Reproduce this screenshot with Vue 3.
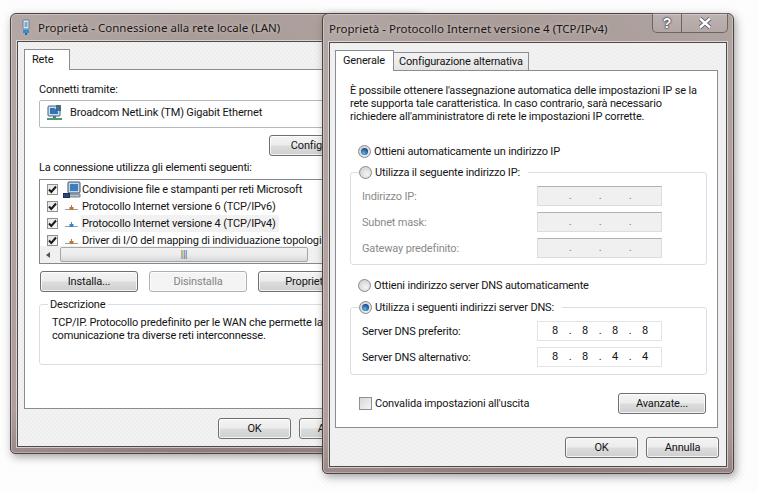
<script setup>
const listItems = [
  { label: 'Condivisione file e stampanti per reti Microsoft', kind: 'pc' },
  { label: 'Protocollo Internet versione 6 (TCP/IPv6)', kind: 'proto', color: '#b9782f' },
  { label: 'Protocollo Internet versione 4 (TCP/IPv4)', kind: 'proto', color: '#3f86c8', selected: true },
  { label: 'Driver di I/O del mapping di individuazione topologia', kind: 'proto', color: '#b9782f' },
]
const ipRows = ['Indirizzo IP:', 'Subnet mask:', 'Gateway predefinito:']
const dnsRows = [
  { label: 'Server DNS preferito:', octets: ['8', '8', '8', '8'] },
  { label: 'Server DNS alternativo:', octets: ['8', '8', '4', '4'] },
]
</script>

<template>
  <div class="desktop">
    <!-- Back window -->
    <section class="win back">
      <header class="titlebar">
        <svg class="title-icon" width="10" height="17" viewBox="0 0 10 17">
          <rect x="2" y="1" width="6" height="9" rx="1" fill="#dfe9f2" stroke="#5b7f9c" />
          <rect x="3.500" y="3" width="3" height="5" fill="#7fa8c9" />
          <path d="M2 11h6v3H2z" fill="#2f8fd0" />
          <path d="M4 14h2v2H4z" fill="#1d6aa5" />
        </svg>
        <span class="title-text">Proprietà - Connessione alla rete locale (LAN)</span>
      </header>
      <div class="client">
        <div class="tabs">
          <div class="tab active">Rete</div>
        </div>
        <div class="panel back-panel">
          <div class="label">Connetti tramite:</div>
          <div class="adapter">
            <svg width="17" height="17" viewBox="0 0 17 17">
              <rect x="2" y="2" width="12" height="10" rx="1" fill="#cfe0ee" stroke="#3c5f7c" />
              <rect x="4" y="4" width="8" height="6" fill="#2f74b5" />
              <path d="M8 4l4 0 0 4z" fill="#7db7e0" />
              <path d="M7 12h3v2H7z" fill="#5d7388" />
              <path d="M1 14h15v2H1z" fill="#4d9a70" />
              <path d="M10 1h5v6h-5z" fill="#2b4f6e" opacity=".75" />
            </svg>
            <span>Broadcom NetLink (TM) Gigabit Ethernet</span>
          </div>
          <div class="config-row">
            <button class="btn wide">Configura...</button>
          </div>
          <div class="label uses">La connessione utilizza gli elementi seguenti:</div>
          <div class="list">
            <div class="list-rows">
              <div v-for="item in listItems" :key="item.label" class="list-row">
                <span class="check on">
                  <svg width="9" height="9" viewBox="0 0 9 9"><path d="M1 4.500l2.300 2.500L8 1.500" fill="none" stroke="#1a1a1a" stroke-width="2" /></svg>
                </span>
                <svg v-if="item.kind === 'pc'" class="row-icon" width="18" height="18" viewBox="0 0 18 18">
                  <rect x="5" y="1" width="12" height="11" rx="1" fill="#c9d6e2" stroke="#39506a" />
                  <rect x="7" y="3" width="8" height="7" fill="#3a7fc4" />
                  <path d="M5 13h12v3H5z" fill="#b8bfc6" stroke="#5c6773" stroke-width=".8" />
                  <rect x="0.500" y="12.500" width="6" height="4" fill="#27457e" stroke="#1c2f57" />
                </svg>
                <svg v-else class="row-icon" width="18" height="18" viewBox="0 0 18 18">
                  <path d="M2 11.500h13" stroke="#9aa0a6" stroke-width="1" />
                  <rect x="6.500" y="9" width="4" height="3" :fill="item.color" />
                  <path d="M8.500 7v2" :stroke="item.color" stroke-width="1" />
                </svg>
                <span class="row-text" :class="{ selected: item.selected }">{{ item.label }}</span>
              </div>
            </div>
            <div class="hscroll">
              <span class="arrow"></span>
              <div class="thumb">|||</div>
            </div>
          </div>
          <div class="btn-row">
            <button class="btn wide">Installa...</button>
            <button class="btn wide" disabled>Disinstalla</button>
            <button class="btn wide">Proprietà</button>
          </div>
          <div class="group desc">
            <span class="legend desc-legend">Descrizione</span>
            <p class="desc-text">TCP/IP. Protocollo predefinito per le WAN che permette la<br />comunicazione tra diverse reti interconnesse.</p>
          </div>
        </div>
        <footer class="foot back-foot">
          <button class="btn ok">OK</button>
          <button class="btn ok">Annulla</button>
        </footer>
      </div>
    </section>

    <!-- Front window -->
    <section class="win front">
      <header class="titlebar">
        <span class="title-text">Proprietà - Protocollo Internet versione 4 (TCP/IPv4)</span>
        <div class="caption">
          <div class="cap-btn help">?</div>
          <div class="cap-btn close">
            <svg width="16" height="12" viewBox="0 0 16 12">
              <path d="M3 1.500l10 9M13 1.500l-10 9" stroke="#4c4a63" stroke-width="4" />
              <path d="M3 1.500l10 9M13 1.500l-10 9" stroke="#fff" stroke-width="2.400" />
            </svg>
          </div>
        </div>
      </header>
      <div class="client">
        <div class="tabs">
          <div class="tab active gen">Generale</div>
          <div class="tab idle">Configurazione alternativa</div>
        </div>
        <div class="panel front-panel">
          <p class="intro">
            È possibile ottenere l'assegnazione automatica delle impostazioni IP se la<br />
            rete supporta tale caratteristica. In caso contrario, sarà necessario<br />
            richiedere all'amministratore di rete le impostazioni IP corrette.
          </p>
          <label class="choice first"><span class="radio on"></span>Ottieni automaticamente un indirizzo IP</label>
          <div class="group ipgroup">
            <label class="choice legend"><span class="radio"></span>Utilizza il seguente indirizzo IP:</label>
            <div v-for="row in ipRows" :key="row" class="ip-row off">
              <span>{{ row }}</span>
              <div class="ip-field off">
                <template v-for="n in 4" :key="n">
                  <span class="octet"></span><span v-if="n < 4" class="dot">.</span>
                </template>
              </div>
            </div>
          </div>
          <label class="choice dns-auto"><span class="radio"></span>Ottieni indirizzo server DNS automaticamente</label>
          <div class="group dnsgroup">
            <label class="choice legend"><span class="radio on"></span>Utilizza i seguenti indirizzi server DNS:</label>
            <div v-for="row in dnsRows" :key="row.label" class="ip-row">
              <span>{{ row.label }}</span>
              <div class="ip-field">
                <template v-for="(o, i) in row.octets" :key="i">
                  <span class="octet">{{ o }}</span><span v-if="i < 3" class="dot">.</span>
                </template>
              </div>
            </div>
          </div>
          <div class="validate">
            <label class="choice"><span class="check big"></span>Convalida impostazioni all'uscita</label>
            <button class="btn adv">Avanzate...</button>
          </div>
        </div>
        <footer class="foot front-foot">
          <button class="btn ok">OK</button>
          <button class="btn ok">Annulla</button>
        </footer>
      </div>
    </section>
  </div>
</template>

<style scoped>
.desktop {
  position: relative;
  width: 757px;
  height: 491px;
  overflow: hidden;
  background-color: #fefefe;
  background-image: repeating-conic-gradient(#fefefe 0 25%, #fbfbfb 0 50%);
  background-size: 4px 4px;
  font-family: Roboto, "Noto Sans", sans-serif;
  font-size: 11px;
  letter-spacing: -.17px;
  line-height: 13px;
  color: #141414;
}
.win {
  position: absolute;
  box-sizing: border-box;
  display: flex;
  flex-direction: column;
  border: 1px solid #4d4543;
  border-radius: 6px 6px 5px 5px;
  padding: 0 6px 6px;
  background:
    linear-gradient(90deg, rgba(255, 255, 255, .12), rgba(255, 255, 255, 0) 45%, rgba(255, 255, 255, .08)),
    linear-gradient(#a99c99, #a5918e 90%, #8c7b78);
  box-shadow: 2px 3px 8px rgba(60, 50, 50, .45), inset 0 0 0 1px rgba(255, 255, 255, .3);
}
.back {
  left: 10px;
  top: 13px;
  width: 412px;
  height: 441px;
}
.front {
  left: 322px;
  top: 13px;
  width: 412px;
  height: 461px;
}
.titlebar {
  position: relative;
  display: flex;
  align-items: center;
  height: 28px;
  flex: none;
  gap: 7px;
}
.back .titlebar {
  height: 27px;
}
.title-icon {
  margin-left: 4px;
}
.title-text {
  font-family: "Noto Sans", sans-serif;
  font-size: 11.500px;
  letter-spacing: 0;
  color: #1c1514;
  white-space: nowrap;
  text-shadow: 0 0 4px rgba(255, 255, 255, .55);
}
.caption {
  position: absolute;
  top: -1px;
  right: -1px;
  display: flex;
  width: 76px;
  height: 20px;
  box-sizing: border-box;
  border: 1px solid #6f6462;
  border-top: 0;
  border-radius: 0 0 5px 5px;
  background: linear-gradient(rgba(255, 255, 255, .18), rgba(255, 255, 255, .06));
}
.cap-btn {
  display: flex;
  align-items: center;
  justify-content: center;
}
.help {
  width: 28px;
  border-right: 1px solid #6f6462;
  font: bold 14px/16px "Liberation Sans", sans-serif;
  color: #fff;
  text-shadow: 0 0 2px #3c3a55, 0 0 2px #3c3a55, 0 0 1px #3c3a55;
}
.close {
  flex: 1;
}
.client {
  flex: 1;
  display: flex;
  flex-direction: column;
  box-sizing: border-box;
  padding: 7px 7px 0 5px;
  border: 1px solid #4f4a49;
  background-color: #f0f0f0;
  background-image: repeating-conic-gradient(#f2f2f2 0 25%, #eeeeee 0 50%);
  background-size: 4px 4px;
  box-shadow: 0 0 0 1px rgba(255, 255, 255, .55);
}
.back .client {
  padding-left: 6px;
}
.tabs {
  display: flex;
  align-items: flex-end;
  height: 20px;
  flex: none;
  position: relative;
  z-index: 1;
}
.tab {
  box-sizing: border-box;
  border: 1px solid #898c95;
  white-space: nowrap;
}
.tab.active {
  height: 21px;
  margin-bottom: -1px;
  border-bottom: 0;
  background: #fff;
  padding: 3px 7px 0;
}
.gen {
  width: 59px;
}
.idle {
  width: 136px;
  height: 18px;
  margin-left: -1px;
  padding: 2px 4px 0 5px;
  border-bottom: 0;
  background: linear-gradient(#f3f3f3, #e4e4e4);
}
.back .tab.active {
  width: 46px;
}
.panel {
  box-sizing: border-box;
  flex: none;
  margin-right: 1px;
  border: 1px solid #898c95;
  background: #fff;
  padding-left: 14px;
}
.back-panel {
  height: 340px;
  padding-top: 13px;
}
.front-panel {
  height: 358px;
  padding-top: 13px;
}
.label {
  white-space: nowrap;
}
.adapter {
  box-sizing: border-box;
  display: flex;
  align-items: center;
  gap: 7px;
  width: 340px;
  height: 28px;
  margin-top: 4px;
  padding: 0 0 3px 6px;
  border: 1px solid #b5b9bd;
  border-radius: 2px;
  white-space: nowrap;
}
.config-row {
  display: flex;
  margin: 7px 0 0 230px;
}
.uses {
  margin-top: 5px;
}
.list {
  box-sizing: border-box;
  display: flex;
  flex-direction: column;
  width: 330px;
  height: 85px;
  margin-top: 5px;
  border: 1px solid #828790;
  overflow: hidden;
}
.list-rows {
  flex: 1;
  overflow: hidden;
  padding-top: 1px;
}
.list-row {
  display: flex;
  align-items: center;
  height: 17px;
  padding-left: 7px;
  white-space: nowrap;
}
.row-icon {
  margin-left: 5px;
  flex: none;
}
.row-text {
  padding: 0 3px 0 1px;
  line-height: 17px;
}
.row-text.selected {
  background: #f2f2f2;
}
.check {
  box-sizing: border-box;
  display: flex;
  align-items: center;
  justify-content: center;
  flex: none;
  width: 11px;
  height: 11px;
  border: 1px solid #8e8f8f;
  background: linear-gradient(135deg, #e2e2e2, #fbfbfb);
}
.check.big {
  width: 13px;
  height: 13px;
  margin-right: 3px;
  background: linear-gradient(135deg, #d8d8d8, #f4f4f4);
}
.hscroll {
  display: flex;
  align-items: center;
  flex: none;
  height: 17px;
  background: #f0f0f0;
}
.arrow {
  width: 0;
  height: 0;
  margin: 0 7px 0 6px;
  border: 3px solid transparent;
  border-right: 4px solid #555;
  border-left: 0;
}
.thumb {
  box-sizing: border-box;
  width: 248px;
  height: 15px;
  margin-left: 3px;
  border: 1px solid #a3a8ad;
  border-radius: 2px;
  background: linear-gradient(#f2f2f2, #ececec 50%, #d8d8d8);
  text-align: center;
  font: 9px/12px "Liberation Sans", sans-serif;
  color: #555;
}
.btn-row {
  display: flex;
  gap: 11px;
  margin: 7px 0 0 1px;
}
.btn {
  box-sizing: border-box;
  margin: 0;
  padding: 0;
  border: 1px solid #707070;
  border-radius: 3px;
  background: linear-gradient(#f4f4f4, #ececec 48%, #dcdcdc 52%, #cfcfcf);
  box-shadow: inset 0 0 0 1px rgba(255, 255, 255, .75);
  font: inherit;
  letter-spacing: inherit;
  color: #141414;
  white-space: nowrap;
}
.btn:disabled {
  border-color: #adb2b5;
  background: #f4f4f4;
  color: #848484;
}
.wide {
  width: 98px;
  height: 21px;
  flex: none;
}
.ok {
  width: 73px;
  height: 21px;
  flex: none;
}
.adv {
  width: 88px;
  height: 21px;
}
.group {
  position: relative;
  box-sizing: border-box;
  border: 1px solid #d5dfe5;
  border-radius: 3px;
}
.desc {
  width: 340px;
  height: 61px;
  margin-top: 12px;
  padding: 11px 0 0 12px;
}
.legend {
  position: absolute;
  top: -7px;
  left: 8px;
  background: #fff;
  padding: 0 3px 0 2px;
  white-space: nowrap;
}
.desc-text {
  margin: 0;
  white-space: nowrap;
}
.foot {
  display: flex;
  gap: 8px;
  flex: none;
}
.back-foot {
  margin: 9px 0 0 194px;
}
.front-foot {
  margin-top: 9px;
  justify-content: flex-end;
}
.intro {
  margin: 0;
  white-space: nowrap;
}
.choice {
  display: flex;
  align-items: center;
  height: 14px;
  white-space: nowrap;
}
.radio {
  box-sizing: border-box;
  display: flex;
  align-items: center;
  justify-content: center;
  flex: none;
  width: 13px;
  height: 13px;
  margin-right: 3px;
  border: 1px solid #8a8a8a;
  border-radius: 50%;
  background: radial-gradient(circle at 60% 65%, #f4f4f4, #c9c9c9);
}
.radio.on::after {
  content: "";
  width: 7px;
  height: 7px;
  border-radius: 50%;
  background: radial-gradient(circle at 40% 70%, #5fb4ea, #12447f 75%);
}
.first {
  margin: 21px 0 0 8px;
}
.ipgroup {
  width: 357px;
  height: 93px;
  margin-top: 14px;
  padding-top: 13px;
}
.ipgroup .legend,
.dnsgroup .legend {
  top: -8px;
  left: 8px;
  padding: 0 8px 0 0;
}
.ip-row {
  display: flex;
  align-items: center;
  justify-content: space-between;
  height: 20px;
  margin: 0 44px 6px 11px;
  white-space: nowrap;
}
.ip-row.off {
  color: #8a8a8a;
}
.ip-field {
  box-sizing: border-box;
  display: flex;
  width: 125px;
  height: 20px;
  padding-left: 6px;
  border: 1px solid #e3e3e3;
  background: #fff;
  color: #141414;
  line-height: 18px;
}
.ip-field.off {
  border-color: #b9afad #dcdcdc #dcdcdc;
  background: #f0f0f0;
  color: #777;
}
.octet {
  width: 22px;
  text-align: center;
  flex: none;
}
.dot {
  width: 8px;
  text-align: center;
  flex: none;
}
.dns-auto {
  margin: 13px 0 0 8px;
}
.dnsgroup {
  width: 357px;
  height: 68px;
  margin-top: 15px;
  padding-top: 13px;
}
.validate {
  display: flex;
  align-items: center;
  justify-content: space-between;
  width: 347px;
  margin: 18px 0 0 9px;
}
</style>
